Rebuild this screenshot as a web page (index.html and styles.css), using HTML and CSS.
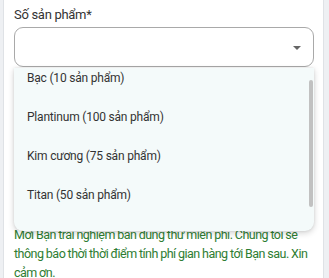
FILE: index.html
```html
<!DOCTYPE html>
<html lang="vi">
<head>
<meta charset="utf-8">
<link rel="stylesheet" href="styles.css">
</head>
<body>
<div class="card">
  <div class="field">
    <label class="label">Số sản phẩm*</label>
    <div class="select">
      <svg class="arrow" width="8" height="4" viewBox="0 0 8 4"><path d="M0 0h8L4 4z" fill="#666"/></svg>
    </div>
    <div class="menu">
      <div class="list">
        <div class="item">Bạc (10 sản phẩm)</div>
        <div class="item">Plantinum (100 sản phẩm)</div>
        <div class="item">Kim cương (75 sản phẩm)</div>
        <div class="item">Titan (50 sản phẩm)</div>
      </div>
      <div class="scrollbar"></div>
    </div>
  </div>
  <p class="note">Mời Bạn trải nghiệm bản dùng thử miễn phí. Chúng tôi sẽ thông báo thời thời điểm tính phí gian hàng tới Bạn sau. Xin cảm ơn.</p>
</div>
</body>
</html>
```
FILE: styles.css
```css
html, body {
  margin: 0;
  padding: 0;
}
body {
  background: #eef0f3;
  font-family: Roboto, "Noto Sans", sans-serif;
  height: 278px;
  overflow: hidden;
}
.card {
  margin-left: 3px;
  width: 321px;
  height: 278px;
  background: #fff;
  border-left: 1px solid #dfe2e6;
  border-right: 1px solid #dfe2e6;
  box-sizing: border-box;
  padding: 0 9px 0 10px;
}
.field {
  position: relative;
  padding-top: 7px;
}
.label {
  display: block;
  font-size: 13px;
  line-height: 16px;
  color: #333;
  letter-spacing: -0.3px;
}
.select {
  margin-top: 4px;
  height: 40px;
  border: 1px solid #a9a9a9;
  border-radius: 9px;
  box-sizing: border-box;
  display: flex;
  align-items: center;
  justify-content: flex-end;
  padding-right: 12px;
}
.arrow {
  display: block;
  margin-top: 2px;
}
.menu {
  position: absolute;
  left: 0;
  right: 0;
  top: 68px;
  height: 163px;
  background: #f4fafa;
  border-radius: 0 0 9px 9px;
  box-shadow: 0 2px 6px rgba(0,0,0,0.18), 0 0 3px rgba(0,0,0,0.08);
  overflow: hidden;
}
.list {
  margin-top: -10px;
}
.item {
  height: 39px;
  display: flex;
  align-items: center;
  padding-left: 13px;
  font-size: 12px;
  color: #333;
  letter-spacing: -0.2px;
}
.scrollbar {
  position: absolute;
  right: 1px;
  top: 12px;
  width: 4px;
  height: 127px;
  border-radius: 2px;
  background: #c1c1c1;
}
.note {
  margin: 158px 0 0;
  font-size: 12.5px;
  line-height: 19px;
  color: #2e7d32;
  letter-spacing: -0.5px;
  word-spacing: -0.3px;
}
```
